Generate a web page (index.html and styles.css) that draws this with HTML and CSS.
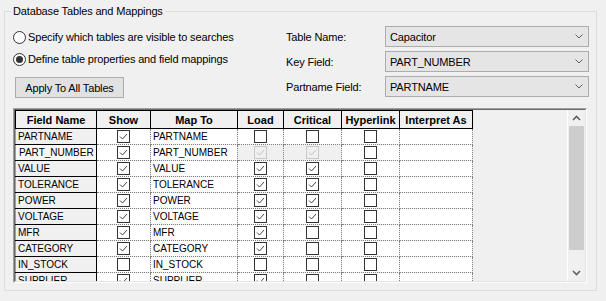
FILE: index.html
```html
<!DOCTYPE html>
<html lang="en">
<head>
    <meta charset="UTF-8">
    <title>Database Tables and Mappings</title>
    <link rel="stylesheet" href="styles.css">
</head>
<body>
    <fieldset class="group">
        <legend>Database Tables and Mappings</legend>
        <div class="top">
            <div class="options">
                <label class="radio"><span class="dot"></span>Specify which tables are visible to searches</label>
                <label class="radio"><span class="dot on"></span>Define table properties and field mappings</label>
                <button class="btn">Apply To All Tables</button>
            </div>
            <div class="fields">
                <span class="field-label">Table Name:</span>
                <div class="combo">Capacitor<svg class="chev" width="8" height="5" viewBox="0 0 8 5"><path d="M0.5 0.5 L4 4 L7.5 0.5" fill="none" stroke="#606060"/></svg></div>
                <span class="field-label">Key Field:</span>
                <div class="combo">PART_NUMBER<svg class="chev" width="8" height="5" viewBox="0 0 8 5"><path d="M0.5 0.5 L4 4 L7.5 0.5" fill="none" stroke="#606060"/></svg></div>
                <span class="field-label">Partname Field:</span>
                <div class="combo">PARTNAME<svg class="chev" width="8" height="5" viewBox="0 0 8 5"><path d="M0.5 0.5 L4 4 L7.5 0.5" fill="none" stroke="#606060"/></svg></div>
            </div>
        </div>

        <div class="grid">
            <div class="grid-inner">
                <div class="grid-area">
                    <table>
                        <colgroup>
                            <col class="c-name"><col class="c-show"><col class="c-map"><col class="c-load">
                            <col class="c-crit"><col class="c-link"><col class="c-interp">
                        </colgroup>
                        <thead>
                            <tr>
                                <th>Field Name</th><th>Show</th><th>Map To</th><th>Load</th>
                                <th>Critical</th><th>Hyperlink</th><th>Interpret As</th>
                            </tr>
                        </thead>
                        <tbody id="rows">
                            <!-- rows are built below -->
                        </tbody>
                    </table>
                </div>
                <div class="scrollbar">
                    <svg class="arrow" width="9" height="6" viewBox="0 0 9 6"><path d="M1 5 L4.5 1.5 L8 5" fill="none" stroke="#606060" stroke-width="1.6"/></svg>
                    <div class="thumb"></div>
                    <div class="track"></div>
                    <svg class="arrow" width="9" height="6" viewBox="0 0 9 6"><path d="M1 1 L4.5 4.5 L8 1" fill="none" stroke="#606060" stroke-width="1.6"/></svg>
                </div>
            </div>
        </div>
    </fieldset>

    <script>
        // name, show, load, critical  (1 = checked, 0 = empty, 2 = disabled + checked)
        const fields = [
            ['PARTNAME', 1, 0, 0],
            ['PART_NUMBER', 1, 2, 2],
            ['VALUE', 1, 1, 1],
            ['TOLERANCE', 1, 1, 1],
            ['POWER', 1, 1, 1],
            ['VOLTAGE', 1, 1, 1],
            ['MFR', 1, 1, 0],
            ['CATEGORY', 1, 1, 0],
            ['IN_STOCK', 0, 0, 0],
            ['SUPPLIER', 1, 1, 0]
        ];

        const tick = '<svg width="11" height="11" viewBox="0 0 11 11"><path d="M2 5.5 L4.5 8 L9 3" fill="none" stroke="currentColor"/></svg>';

        function box(state) {
            if (state === 2) return '<td class="cb off"><span class="check dis">' + tick + '</span></td>';
            return '<td class="cb"><span class="check">' + (state ? tick : '') + '</span></td>';
        }

        const body = document.getElementById('rows');
        fields.forEach(f => {
            const row = document.createElement('tr');
            if (f[0] === 'PART_NUMBER') row.className = 'current';
            row.innerHTML = `
                <td class="name">${f[0]}</td>
                ${box(f[1])}
                <td>${f[0]}</td>
                ${box(f[2])}
                ${box(f[3])}
                ${box(0)}
                <td></td>
            `;
            body.appendChild(row);
        });
    </script>
</body>
</html>
```

FILE: styles.css
```css
body {
    margin: 0;
    padding: 4px;
    background-color: #f0f0f0;
    font-family: "Liberation Sans", Arial, sans-serif;
    font-size: 11px;
    letter-spacing: -0.15px;
    color: #000;
}
.group {
    box-sizing: border-box;
    width: 593px;
    height: 287px;
    margin: 0;
    padding: 0;
    border: 1px solid #dcdcdc;
}
.group legend {
    margin-left: 6px;
    padding: 0 2px;
    line-height: 14px;
}
.top {
    display: flex;
    height: 90px;
    padding-left: 8px;
}
.options {
    width: 273px;
    padding-top: 12px;
    display: flex;
    flex-direction: column;
    align-items: flex-start;
}
.radio {
    display: flex;
    align-items: center;
    height: 14px;
    margin-bottom: 8px;
    white-space: nowrap;
}
.dot {
    box-sizing: border-box;
    width: 13px;
    height: 13px;
    margin-right: 2px;
    border: 1px solid #333;
    border-radius: 50%;
    background: #fff;
    display: flex;
    align-items: center;
    justify-content: center;
}
.dot.on::after {
    content: "";
    width: 7px;
    height: 7px;
    border-radius: 50%;
    background: #333;
}
.btn {
    box-sizing: border-box;
    margin-top: 3px;
    margin-left: 2px;
    width: 109px;
    height: 21px;
    padding: 0;
    border: 1px solid #adadad;
    background-color: #e1e1e1;
    font-family: inherit;
    font-size: 11px;
    letter-spacing: -0.15px;
    color: #000;
}
.fields {
    padding-top: 8px;
    display: grid;
    grid-template-columns: 99px 204px;
    grid-auto-rows: 21px;
    row-gap: 4px;
}
.field-label {
    align-self: center;
    white-space: nowrap;
}
.combo {
    box-sizing: border-box;
    display: flex;
    align-items: center;
    justify-content: space-between;
    padding: 0 5px 0 4px;
    border: 1px solid #acacac;
    background-color: #e5e5e5;
}
.grid {
    box-sizing: border-box;
    margin-left: 8px;
    width: 574px;
    height: 175px;
    border: 1px solid;
    border-color: #a0a0a0 #fff #fff #a0a0a0;
}
.grid-inner {
    box-sizing: border-box;
    height: 100%;
    display: flex;
    border: 1px solid;
    border-color: #696969 #e3e3e3 #e3e3e3 #696969;
}
.grid-area {
    flex: 1;
    overflow: hidden;
    background-color: #f0f0f0;
}
table {
    border-collapse: collapse;
    table-layout: fixed;
    width: 457px;
    font-size: 10px;
    letter-spacing: 0;
}
.c-name { width: 81px; }
.c-show { width: 54px; }
.c-map { width: 87px; }
.c-load { width: 46px; }
.c-crit { width: 58px; }
.c-link { width: 58px; }
.c-interp { width: 73px; }
th {
    height: 17px;
    padding: 0;
    border: 1px solid #000;
    background-color: #f0f0f0;
    font-size: 11px;
    font-weight: bold;
    text-align: center;
}
td {
    height: 15px;
    padding: 0 0 0 2px;
    border: 1px dotted #808080;
    background-color: #fff;
    white-space: nowrap;
    overflow: hidden;
}
td.name {
    border: 1px solid #000;
    border-left-color: #a0a0a0;
    background-color: #f0f0f0;
}
tr.current td.name {
    background-color: #f7f7f7;
    padding-left: 3px;
}
td.cb {
    padding: 0;
    text-align: center;
}
td.off {
    background-color: #f0f0f0;
}
.check {
    box-sizing: border-box;
    display: inline-flex;
    align-items: center;
    justify-content: center;
    width: 13px;
    height: 13px;
    vertical-align: middle;
    border: 1px solid #333;
    background: #fff;
    color: #444;
}
.check.dis {
    border-color: #c8c8c8;
    background: #f0f0f0;
    color: #c0c0c0;
}
.scrollbar {
    width: 17px;
    display: flex;
    flex-direction: column;
    align-items: center;
    background-color: #f0f0f0;
    border-left: 1px solid #fff;
}
.arrow {
    margin: 5px 0;
}
.thumb {
    width: 15px;
    height: 124px;
    background-color: #cdcdcd;
}
.track {
    flex: 1;
}
```
